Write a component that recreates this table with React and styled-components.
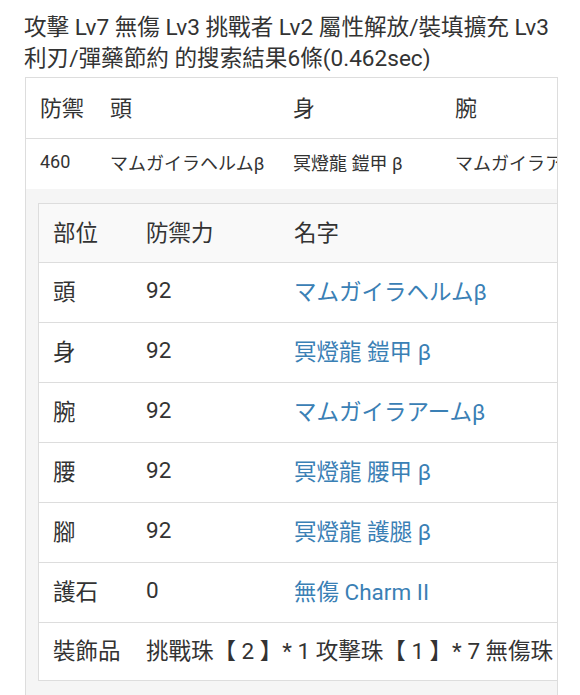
import React from 'react'
import styled, { createGlobalStyle } from 'styled-components'

const GlobalStyle = createGlobalStyle`
  body {
    margin: 0;
    background: #fff;
    font-family: Roboto, "Noto Sans CJK TC", sans-serif;
    color: #333;
  }
`

const Page = styled.div`
  padding: 12px 22px 0 24px;
  height: 695px;
  box-sizing: border-box;
  overflow: hidden;
`

const Title = styled.div`
  font-size: 22.6px;
  line-height: 31px;
  color: #333;
  margin-bottom: 3px;
  white-space: nowrap;
`

const Frame = styled.div`
  margin-left: 1px;
  border: 1px solid #ddd;
  overflow: hidden;
`

const Wide = styled.div`
  width: 720px;
`

// height given in $h includes the lift padding, not the border
const Row = styled.div`
  display: grid;
  grid-template-columns: ${(p) => p.$cols};
  align-items: center;
  height: ${(p) => p.$h - 5}px;
  padding-bottom: 5px;
  font-size: ${(p) => p.$size}px;
  background: ${(p) => p.$bg || '#fff'};
  border-bottom: ${(p) => (p.$last ? 'none' : '1px solid #ddd')};
`

const Cell = styled.div`
  padding: 0 14px;
  white-space: nowrap;
  overflow: hidden;
  color: ${(p) => (p.$link ? '#3a80b5' : '#333')};
`

const Detail = styled.div`
  background: #f5f5f5;
  padding: 14px 0 14px 12px;
`

const Inner = styled.div`
  border: 1px solid #ddd;
  background: #fff;
`

const outerCols = '70px 183px 162px 305px'
const innerCols = '93px 148px 1fr'

const parts = [
  ['頭', '92', 'マムガイラヘルムβ'],
  ['身', '92', '冥燈龍 鎧甲 β'],
  ['腕', '92', 'マムガイラアームβ'],
  ['腰', '92', '冥燈龍 腰甲 β'],
  ['腳', '92', '冥燈龍 護腿 β'],
  ['護石', '0', '無傷 Charm II'],
]

const App = () => (
  <Page>
    <GlobalStyle />
    <Title>
      攻擊 Lv7 無傷 Lv3 挑戰者 Lv2 屬性解放/裝填擴充 Lv3
      <br />
      利刃/彈藥節約 的搜索結果6條(0.462sec)
    </Title>
    <Frame>
      <Wide>
        <Row $cols={outerCols} $h={60} $size={22}>
          <Cell>防禦</Cell>
          <Cell>頭</Cell>
          <Cell>身</Cell>
          <Cell>腕</Cell>
        </Row>
        <Row $cols={outerCols} $h={50} $size={18} $last>
          <Cell>460</Cell>
          <Cell>マムガイラヘルムβ</Cell>
          <Cell>冥燈龍 鎧甲 β</Cell>
          <Cell>マムガイラアームβ</Cell>
        </Row>
        <Detail>
          <Inner>
            <Row $cols={innerCols} $h={58} $size={22.5} $bg="#f9f9f9">
              <Cell>部位</Cell>
              <Cell>防禦力</Cell>
              <Cell>名字</Cell>
            </Row>
            {parts.map(([part, def, name]) => (
              <Row key={part} $cols={innerCols} $h={59} $size={22.5}>
                <Cell>{part}</Cell>
                <Cell>{def}</Cell>
                <Cell $link>{name}</Cell>
              </Row>
            ))}
            <Row $cols="93px 1fr" $h={57} $size={22.5} $last>
              <Cell>裝飾品</Cell>
              <Cell>挑戰珠【 2 】* 1 攻擊珠【 1 】* 7 無傷珠【 1 】* 3</Cell>
            </Row>
          </Inner>
        </Detail>
      </Wide>
    </Frame>
  </Page>
)

export default App
